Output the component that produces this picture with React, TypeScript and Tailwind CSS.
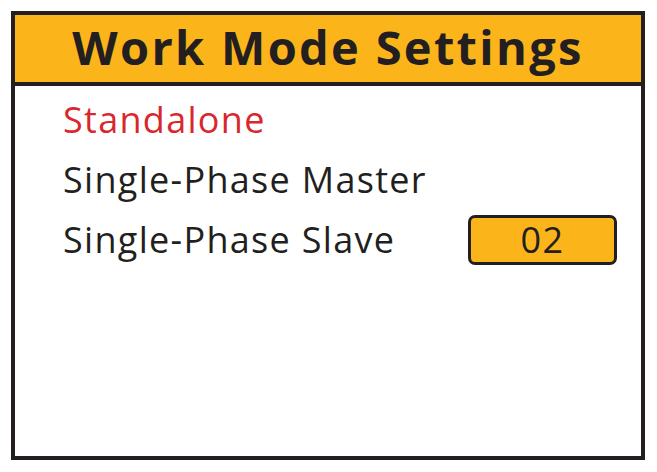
export default function App() {
  const modes = [
    {label: 'Standalone', active: true},
    {label: 'Single-Phase Master', active: false},
    {label: 'Single-Phase Slave', active: false, badge: '02'},
  ];

  return (
    <div className="w-[657px] h-[472px] bg-white pl-[11px] pt-[11px] font-['Open_Sans',sans-serif]">
      <div className="w-[634px] h-[449px] border-4 border-[#231f20] flex flex-col">
        <div className="h-[71px] shrink-0 bg-[#fbb51b] border-b-4 border-[#231f20] flex items-center justify-center">
          <h1 className="text-[47px] leading-none font-bold text-[#231f20] tracking-[2.3px] pb-[2px]">
            Work Mode Settings
          </h1>
        </div>

        <div className="flex flex-col pt-[4px] pl-[48px] pr-[24px]">
          {modes.map((mode) => (
            <div
              key={mode.label}
              className="h-[60px] flex items-center justify-between"
            >
              <span
                className={`text-[36px] leading-[60px] tracking-[1.3px] ${
                  mode.active ? 'text-[#d9272e]' : 'text-[#231f20]'
                }`}
              >
                {mode.label}
              </span>
              {mode.badge && (
                <div className="w-[149px] h-[50px] bg-[#fbb51b] border-[3px] border-[#231f20] rounded-[7px] flex items-center justify-center text-[36px] leading-none tracking-[1.3px] text-[#231f20]">
                  {mode.badge}
                </div>
              )}
            </div>
          ))}
        </div>
      </div>
    </div>
  );
}
